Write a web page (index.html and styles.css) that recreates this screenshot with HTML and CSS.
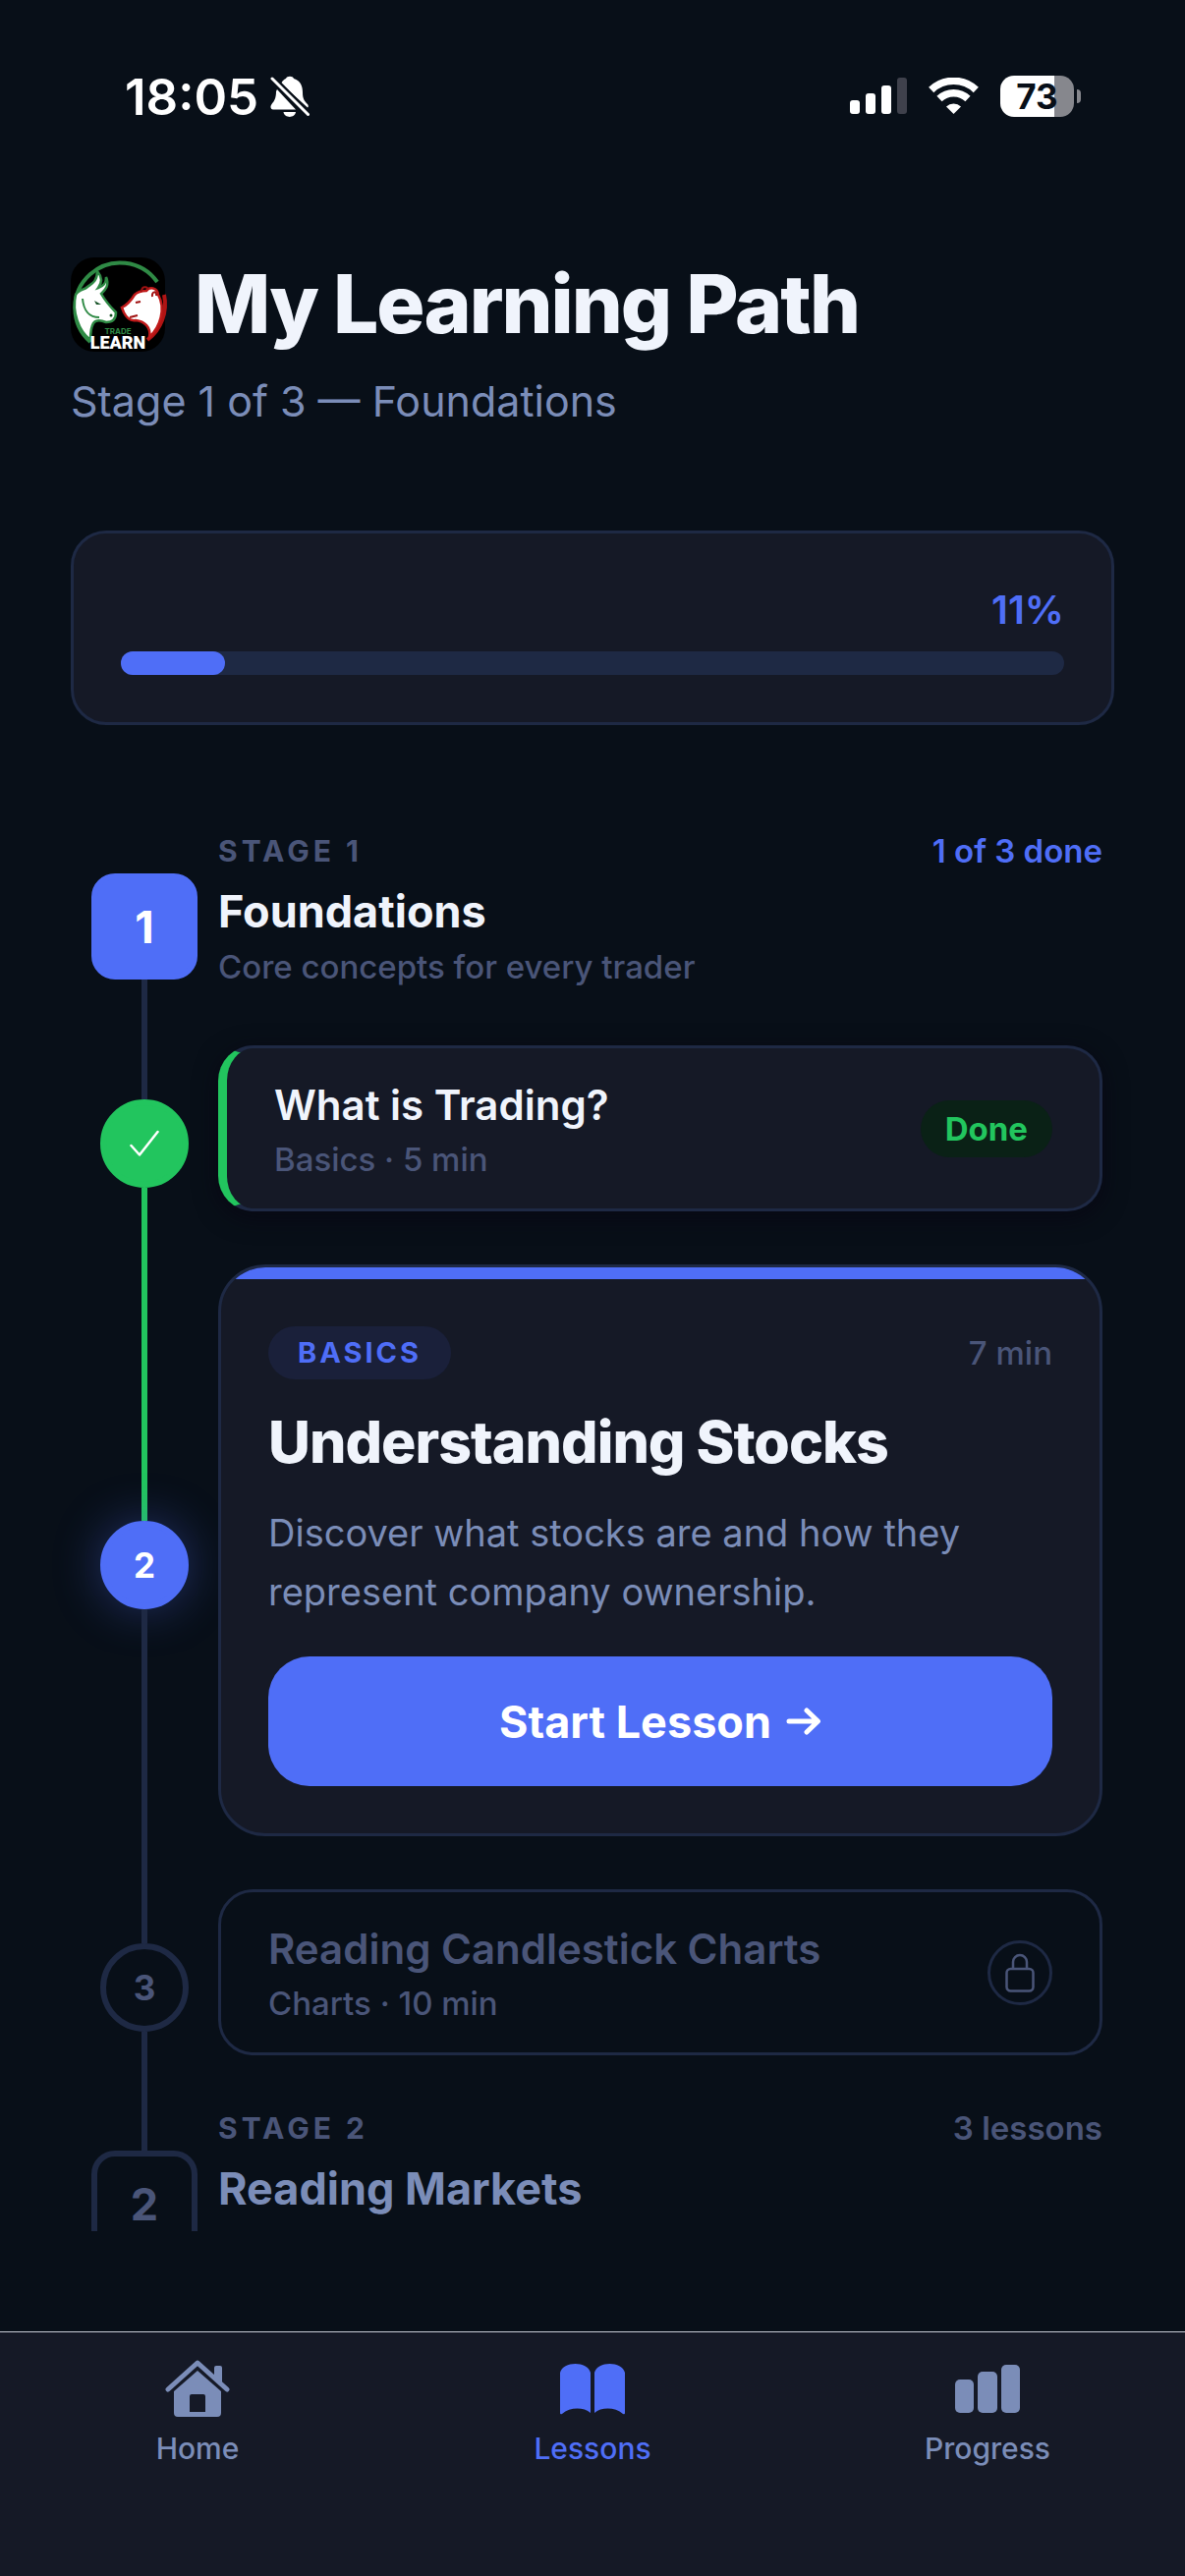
FILE: index.html
```html
<!DOCTYPE html>
<html lang="en">
<head>
  <meta charset="UTF-8">
  <meta name="viewport" content="width=device-width, initial-scale=1.0">
  <title>My Learning Path</title>
  <link rel="stylesheet" href="styles.css">
</head>
<body>
  <div class="status-bar">
    <div class="status-left">
      <span class="clock">18:05</span>
      <svg width="40" height="44" viewBox="0 0 40 44" fill="#fff">
        <path d="M11 9 C13 5 16 4 16 4 C17 1 23 1 24 4 C31 6 33 12 33 18 C33 25 35 27 38 30 C39 31 39 33 38 33.500 Z"/>
        <path d="M6 17 C6 24 4 27 1.500 30 C-.5 32.500 .5 35.500 3 35.500 H26 L7 15 Z"/>
        <path d="M13.500 38 H26 C25 44.500 14.500 44.500 13.500 38 Z"/>
        <path d="M1.500 3 L39 41" stroke="#080f18" stroke-width="7"/>
        <path d="M2 4 L38.500 40.500" stroke="#fff" stroke-width="3" stroke-linecap="round"/>
      </svg>
    </div>
    <div class="status-right">
      <svg width="58" height="38" viewBox="0 0 58 38" fill="#fff">
        <rect x="0" y="23" width="10" height="14" rx="3"/>
        <rect x="16" y="16" width="10" height="21" rx="3"/>
        <rect x="32" y="8" width="10" height="29" rx="3"/>
        <rect x="48" y="0" width="10" height="37" rx="3" fill="#3f414c"/>
      </svg>
      <svg width="51" height="38" viewBox="0 0 51 38" fill="none" stroke="#fff" stroke-width="7.500">
        <path d="M2.700 12.500 A33 33 0 0 1 48.300 12.500"/>
        <path d="M11 21.500 A21 21 0 0 1 40 21.500"/>
        <path d="M25.500 37 L18 29.500 A11 11 0 0 1 33 29.500 Z" fill="#fff" stroke="none"/>
      </svg>
      <div class="battery"><span class="battery-level">73</span><span class="battery-tip"></span></div>
    </div>
  </div>

  <main class="screen">
    <header class="header">
      <div class="header-row">
        <svg class="logo" viewBox="0 0 96 96">
          <rect width="96" height="96" rx="24" fill="#000"/>
          <path d="M20 86 A46 46 0 1 1 88 25" fill="none" stroke="#2f8a45" stroke-width="4"/>
          <path d="M95 38 A46 46 0 0 1 78 84" fill="none" stroke="#b01414" stroke-width="4"/>
          <path d="M5 38 C8 33 14 33 17 30 C21 27 27 25 27 14 C33 21 31 27 28 31 C34 29 36 26 36 20 C40 29 34 34 31 37 C35 44 43 53 46 56 C46 62 43 66 36 66 C31 64 26 63 23 67 C20 72 20 78 20 84 C8 75 1 55 5 38 Z" fill="#fff" stroke="#2f8a45" stroke-width="2.500"/>
          <path d="M12 42 C13 54 19 61 29 61" fill="none" stroke="#2f8a45" stroke-width="2"/>
          <path d="M24 44 L31 48 L26 48 Z" fill="#145024"/>
          <circle cx="41" cy="59" r="1.500" fill="#145024"/>
          <path d="M52 51 C58 48 62 43 65 38 C69 34 74 34 77 34 C80 30 88 30 89 38 C97 52 91 71 80 81 C82 71 75 65 66 64 C60 65 56 60 54 56 Z" fill="#fff" stroke="#c01a1a" stroke-width="2.500"/>
          <path d="M72 35 C72 29 78 29 79 33 M83 40 C82 34 88 34 87 39 M60 61 L68 59 M66 46 L71 45" fill="none" stroke="#a01212" stroke-width="2"/>
          <text x="48" y="78" text-anchor="middle" class="logo-trade">TRADE</text>
          <text x="48" y="93" text-anchor="middle" class="logo-learn">LEARN</text>
        </svg>
        <h1>My Learning Path</h1>
      </div>
      <p class="subtitle">Stage 1 of 3 — Foundations</p>
    </header>

    <section class="progress-card">
      <span class="progress-value">11%</span>
      <div class="progress-track"><div class="progress-fill" style="width: 11%"></div></div>
    </section>

    <section class="path">
      <div class="row stage">
        <div class="rail">
          <span class="line line-none"></span>
          <span class="stage-badge stage-badge-active">1</span>
          <span class="line"></span>
        </div>
        <div class="stage-info">
          <div class="stage-top"><span class="stage-label">STAGE 1</span><span class="stage-count active">1 of 3 done</span></div>
          <h2>Foundations</h2>
          <p class="meta">Core concepts for every trader</p>
        </div>
      </div>

      <div class="row">
        <div class="rail">
          <span class="line"></span>
          <span class="node node-done">
            <svg width="30" height="28" viewBox="0 0 30 28" fill="none" stroke="#fff" stroke-width="2.500" stroke-linecap="round" stroke-linejoin="round"><path d="M1.500 16 L10 25.500 L28.500 2"/></svg>
          </span>
          <span class="line line-done"></span>
        </div>
        <article class="card card-done">
          <div class="card-text">
            <h3>What is Trading?</h3>
            <p class="meta">Basics · 5 min</p>
          </div>
          <span class="done-pill">Done</span>
        </article>
      </div>

      <div class="row">
        <div class="rail">
          <span class="line line-done"></span>
          <span class="node node-current">2</span>
          <span class="line"></span>
        </div>
        <article class="card-current">
          <div class="card-bar"></div>
          <div class="card-body">
            <div class="card-top"><span class="tag">BASICS</span><span class="meta">7 min</span></div>
            <h3>Understanding Stocks</h3>
            <p class="description">Discover what stocks are and how they represent company ownership.</p>
            <button type="button" class="start-button">Start Lesson
              <svg width="36" height="28" viewBox="0 0 36 28" fill="none" stroke="#fff" stroke-width="5" stroke-linecap="round" stroke-linejoin="round"><path d="M3 14 H32 M21 3 L32.500 14 L21 25"/></svg>
            </button>
          </div>
        </article>
      </div>

      <div class="row">
        <div class="rail">
          <span class="line"></span>
          <span class="node">3</span>
          <span class="line"></span>
        </div>
        <article class="card card-locked">
          <div class="card-text">
            <h3>Reading Candlestick Charts</h3>
            <p class="meta">Charts · 10 min</p>
          </div>
          <span class="lock">
            <svg width="30" height="40" viewBox="0 0 30 40" fill="none" stroke="#4a5578" stroke-width="2.500"><rect x="1.500" y="16" width="27" height="22.500" rx="4"/><path d="M8 16 V9 A7 7 0 0 1 22 9 V16"/></svg>
          </span>
        </article>
      </div>

      <div class="row stage">
        <div class="rail">
          <span class="line"></span>
          <span class="stage-badge">2</span>
          <span class="line"></span>
        </div>
        <div class="stage-info stage-locked">
          <div class="stage-top"><span class="stage-label">STAGE 2</span><span class="stage-count">3 lessons</span></div>
          <h2>Reading Markets</h2>
        </div>
      </div>
    </section>
  </main>

  <nav class="tab-bar">
    <a href="#home" class="tab">
      <svg width="66" height="60" viewBox="0 0 66 60" fill="#7b8db8">
        <path d="M3 31 L33 4 L63 31" fill="none" stroke="#7b8db8" stroke-width="5" stroke-linecap="round" stroke-linejoin="round"/>
        <path d="M50 19 V9 Q50 7 52 7 H56 Q58 7 58 9 V27 Z"/>
        <path fill-rule="evenodd" d="M33 12 L57 33 V55 Q57 59 53 59 H13 Q9 59 9 55 V33 Z M27 36 Q25 36 25 38 V54 H41 V38 Q41 36 39 36 Z"/>
      </svg>
      <span>Home</span>
    </a>
    <a href="#lessons" class="tab active">
      <svg width="66" height="60" viewBox="0 0 66 60" fill="#4f6ef7">
        <path d="M0 14 C3 2 28 2 31 14 V55 C24 49 10 49 2 56 Q0 57 0 55 Z"/>
        <path d="M35 14 C38 2 63 2 66 14 V55 Q66 57 64 56 C56 49 42 49 35 55 Z"/>
      </svg>
      <span>Lessons</span>
    </a>
    <a href="#progress" class="tab">
      <svg width="66" height="60" viewBox="0 0 66 60" fill="#7b8db8">
        <rect x="0" y="21" width="19" height="34" rx="5"/>
        <rect x="23" y="13" width="20" height="42" rx="5"/>
        <rect x="47" y="6" width="19" height="49" rx="5"/>
      </svg>
      <span>Progress</span>
    </a>
  </nav>
</body>
</html>
```
FILE: styles.css
```css
* {
  box-sizing: border-box;
  margin: 0;
  padding: 0;
}
body {
  height: 100vh;
  display: flex;
  flex-direction: column;
  background-color: #080f18;
  color: #f0f4fc;
  font-family: Inter, Roboto, sans-serif;
}

/* status bar */
.status-bar {
  height: 196px;
  padding: 0 113px 0 127px;
  display: flex;
  flex-shrink: 0;
  align-items: center;
  justify-content: space-between;
  color: #fff;
}
.status-left {
  display: flex;
  align-items: center;
  gap: 12px;
}
.clock {
  font-size: 51px;
  font-weight: 600;
}
.status-right {
  display: flex;
  align-items: center;
  gap: 22px;
}
.battery {
  position: relative;
  width: 75px;
  height: 42px;
  border-radius: 14px;
  background: linear-gradient(to right, #fff 73%, #86878d 73%);
  text-align: center;
  line-height: 42px;
}
.battery-level {
  color: #080f18;
  font-size: 35px;
  font-weight: 700;
}
.battery-tip {
  position: absolute;
  left: 78px;
  top: 14px;
  width: 4px;
  height: 14px;
  border-radius: 0 6px 6px 0;
  background-color: #86878d;
}

/* header */
.screen {
  flex: 1;
  min-height: 0;
  margin-bottom: 102px;
  padding: 55px 72px 0;
  overflow: hidden;
}
.header-row {
  display: flex;
  align-items: center;
  gap: 30px;
}
.logo {
  width: 96px;
  height: 96px;
  overflow: visible;
}
.logo-trade {
  fill: #2f8a45;
  font-size: 8px;
  font-weight: 700;
}
.logo-learn {
  fill: #fff;
  font-family: Roboto, sans-serif;
  font-size: 18px;
  font-weight: 900;
}
h1 {
  font-size: 82px;
  font-weight: 800;
  line-height: 118px;
  letter-spacing: -2px;
}
.subtitle {
  color: #7b8db8;
  font-size: 43px;
  line-height: 78px;
}

/* overall progress */
.progress-card {
  margin-top: 93px;
  padding: 48px;
  border: 3px solid #1e2944;
  border-radius: 36px;
  background-color: #151926;
}
.progress-value {
  display: block;
  margin-bottom: 12px;
  color: #4f6ef7;
  font-size: 40px;
  font-weight: 600;
  line-height: 60px;
  text-align: right;
}
.progress-track {
  height: 24px;
  border-radius: 12px;
  background-color: #1e2944;
}
.progress-fill {
  height: 24px;
  border-radius: 12px;
  background-color: #4f6ef7;
}

/* learning path */
.path {
  margin-top: 96px;
  padding-right: 12px;
}
.row {
  display: grid;
  grid-template-columns: 150px 1fr;
}
.rail {
  display: flex;
  flex-direction: column;
  align-items: center;
}
.line {
  flex: 1;
  width: 6px;
  background-color: #1e2944;
}
.line-none {
  background-color: transparent;
}
.line-done {
  background-color: #22c55e;
}
.stage-badge, .node {
  display: flex;
  align-items: center;
  justify-content: center;
  border: 6px solid #1e2944;
  color: #4a5578;
  font-weight: 700;
}
.stage-badge {
  width: 108px;
  height: 108px;
  border-radius: 24px;
  font-size: 45px;
}
.stage-badge-active {
  border-color: #4f6ef7;
  background-color: #4f6ef7;
  color: #fff;
}
.node {
  width: 90px;
  height: 90px;
  border-radius: 50%;
  font-size: 35px;
}
.node-done {
  border-color: #22c55e;
  background-color: #22c55e;
}
.node-current {
  border-color: #4f6ef7;
  background-color: #4f6ef7;
  box-shadow: 0 0 48px rgba(79, 110, 247, 0.35);
  color: #fff;
}

.stage {
  height: 218px;
}
.stage-info {
  padding-top: 12px;
}
.stage-top, .card-top {
  display: flex;
  align-items: center;
  justify-content: space-between;
}
.stage-top {
  height: 40px;
  margin-bottom: 12px;
}
.stage-label {
  color: #4a5578;
  font-size: 30px;
  font-weight: 700;
  letter-spacing: 4px;
}
.stage-count {
  color: #4a5578;
  font-size: 33px;
  font-weight: 600;
}
.active {
  color: #4f6ef7;
}
h2 {
  font-size: 45px;
  font-weight: 700;
  line-height: 60px;
}
.stage-locked h2 {
  color: #7b8db8;
}
.meta {
  color: #4a5578;
  font-size: 33px;
  font-weight: 500;
  line-height: 44px;
}
.stage-info .meta {
  margin-top: 4px;
}

.card, .card-current {
  margin: 12px 0 42px;
  border: 3px solid #1e2944;
  background-color: #151926;
}
.card {
  display: flex;
  align-items: center;
  justify-content: space-between;
  padding: 28px 48px;
  border-radius: 36px;
}
.card h3 {
  margin-bottom: 3px;
  font-size: 42px;
  font-weight: 600;
  line-height: 60px;
}
.card-done {
  border-left: 9px solid #22c55e;
  box-shadow: 0 6px 24px rgba(8, 4, 16, 0.6);
}
.done-pill {
  padding: 0 25px;
  border-radius: 29px;
  background-color: #0a2116;
  color: #22c55e;
  font-size: 33px;
  font-weight: 700;
  line-height: 58px;
}
.card-locked {
  background-color: transparent;
}
.card-locked h3 {
  color: #4a5578;
}
.lock {
  display: flex;
  align-items: center;
  justify-content: center;
  width: 66px;
  height: 66px;
  border: 3px solid #1e2944;
  border-radius: 50%;
}

.card-current {
  border-radius: 48px;
  overflow: hidden;
}
.card-bar {
  height: 12px;
  background-color: #4f6ef7;
}
.card-body {
  padding: 48px;
}
.tag {
  padding: 0 30px;
  border-radius: 27px;
  background-color: #1a203a;
  color: #4f6ef7;
  font-size: 29px;
  font-weight: 700;
  letter-spacing: 3px;
  line-height: 54px;
}
.card-body h3 {
  margin: 28px 0 26px;
  font-size: 59px;
  font-weight: 800;
  line-height: 72px;
  letter-spacing: -1px;
}
.description {
  color: #7b8db8;
  font-size: 38px;
  line-height: 60px;
}
.start-button {
  display: flex;
  align-items: center;
  justify-content: center;
  gap: 15px;
  width: 100%;
  height: 132px;
  margin-top: 36px;
  border: 0;
  border-radius: 42px;
  background-color: #4f6ef7;
  color: #fff;
  font-family: inherit;
  font-size: 45px;
  font-weight: 700;
}

/* bottom tabs */
.tab-bar {
  height: 249px;
  padding-top: 27px;
  display: flex;
  flex-shrink: 0;
  border-top: 1px solid #c8ccd6;
  background-color: #151926;
}
.tab {
  flex: 1;
  display: flex;
  flex-direction: column;
  align-items: center;
  gap: 11px;
  color: #7b8db8;
  font-size: 30px;
  font-weight: 500;
  line-height: 40px;
  text-decoration: none;
}
.tab.active {
  color: #4f6ef7;
}
```
